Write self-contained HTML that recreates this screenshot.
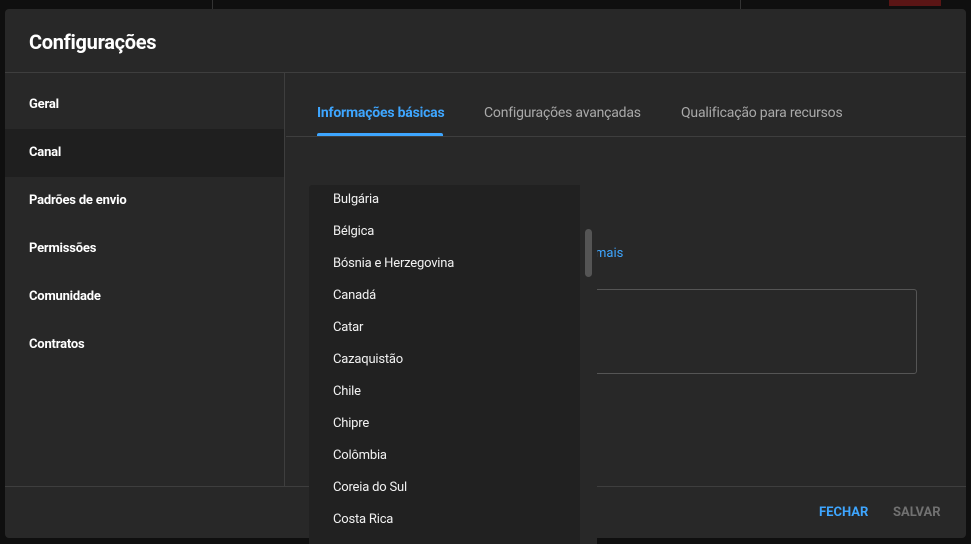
<!DOCTYPE html>
<html><head><meta charset="utf-8"><style>
*{margin:0;padding:0;box-sizing:border-box}
body{width:971px;height:544px;background:#0f0f0f;overflow:hidden;position:relative;font-family:Roboto,"Liberation Sans",sans-serif;color:#fff}
.dlg{position:absolute;left:5px;top:9px;width:961px;height:529px;background:#282828;border-radius:4px}
.title{position:absolute;left:24px;top:21px;font-size:20px;font-weight:bold;letter-spacing:-0.3px}
.hline{position:absolute;left:0;right:0;top:63px;height:1px;background:#3e3e3e}
.side{position:absolute;left:0;top:64px;width:280px;height:413px;border-right:1px solid #3e3e3e;padding-top:8px}
.side div{height:48px;line-height:48px;padding-left:24px;font-size:13px;font-weight:bold;letter-spacing:-0.2px}
.side .sel{background:#1f1f1f}
.tabs{position:absolute;left:312px;top:96px;font-size:14px;color:#aaa;letter-spacing:-0.2px}
.tabs span{position:absolute;white-space:nowrap}
.tabline{position:absolute;left:281px;right:0;top:127px;height:1px;background:#3e3e3e}
.ind{position:absolute;left:312px;top:124px;width:126px;height:3px;background:#3ea6ff;border-radius:2px 2px 0 0}
.fline{position:absolute;left:0;right:0;top:477px;height:1px;background:#3e3e3e}
.btn{position:absolute;top:496px;font-size:13px;font-weight:bold}
.box{position:absolute;left:560px;top:280px;width:352px;height:85px;border:1px solid #555;border-radius:3px}
.mais{position:absolute;left:590px;top:237px;font-size:13px;color:#3ea6ff}
.dd{position:absolute;left:309px;top:185px;width:288px;height:359px;background:#212121;border-radius:3px 3px 0 0}
.dd .sb{position:absolute;right:0;top:0;width:17px;height:100%;background:#282828}
.dd .th{position:absolute;left:276px;top:44px;width:7px;height:48px;background:#555;border-radius:4px}
.dd div.i{position:absolute;left:24px;font-size:13px;color:#f1f1f1;letter-spacing:-0.2px}
</style></head><body>
<div style="position:absolute;left:212px;top:0;width:1px;height:9px;background:#333"></div>
<div style="position:absolute;left:740px;top:0;width:1px;height:9px;background:#333"></div>
<div style="position:absolute;left:889px;top:0;width:52px;height:6px;background:#5a1515"></div>
<div class="dlg">
<div class="title">Configurações</div>
<div class="hline"></div>
<div class="side">
<div>Geral</div><div class="sel">Canal</div><div>Padrões de envio</div><div>Permissões</div><div>Comunidade</div><div>Contratos</div>
</div>
<div class="tabs"><span style="left:0;color:#3ea6ff;font-weight:bold">Informações básicas</span><span style="left:167px">Configurações avançadas</span><span style="left:364px">Qualificação para recursos</span></div>
<div class="ind"></div>
<div class="tabline"></div>
<div class="mais">mais</div>
<div class="box"></div>
<div class="fline"></div>
<div class="btn" style="left:814px;color:#3ea6ff">FECHAR</div>
<div class="btn" style="left:888px;color:#717171">SALVAR</div>
</div>
<div class="dd">
<div class="sb"></div><div class="th"></div>
<div class="i" style="top:7px">Bulgária</div>
<div class="i" style="top:39px">Bélgica</div>
<div class="i" style="top:71px">Bósnia e Herzegovina</div>
<div class="i" style="top:103px">Canadá</div>
<div class="i" style="top:135px">Catar</div>
<div class="i" style="top:167px">Cazaquistão</div>
<div class="i" style="top:199px">Chile</div>
<div class="i" style="top:231px">Chipre</div>
<div class="i" style="top:263px">Colômbia</div>
<div class="i" style="top:295px">Coreia do Sul</div>
<div class="i" style="top:327px">Costa Rica</div>
</div>
</body></html>
